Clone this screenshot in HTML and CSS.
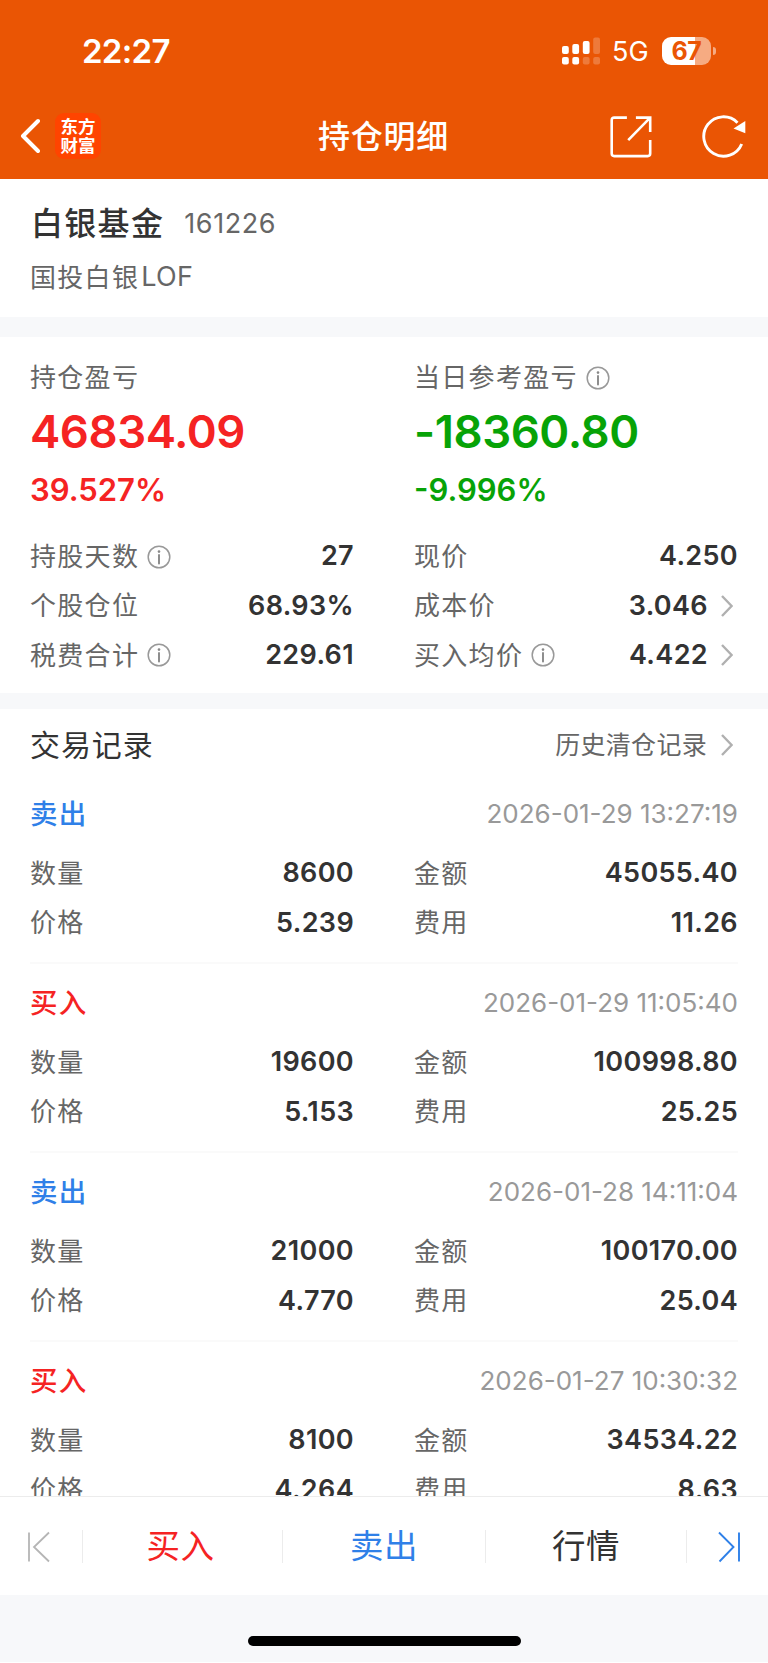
FILE: index.html
```html
<!DOCTYPE html>
<html lang="zh-CN">
<head>
<meta charset="utf-8">
<title>持仓明细</title>
<link rel="stylesheet" href="styles.css">
</head>
<body>
<svg class="defs" width="0" height="0">
  <symbol id="info" viewBox="0 0 24 24"><circle cx="12" cy="12" r="10.8" fill="none" stroke="#999" stroke-width="1.5"/><circle cx="12" cy="6.6" r="1.3" fill="#888"/><path d="M12 10v8.5" stroke="#888" stroke-width="1.9" stroke-linecap="round"/></symbol>
  <symbol id="chev" viewBox="0 0 12 22"><path d="M1 1l9.6 10L1 21" fill="none" stroke="#b0b0b0" stroke-width="2.4"/></symbol>
</svg>
<div class="screen">
  <header class="top">
    <div class="status">
      <span class="time">22:27</span>
      <div class="sys">
        <svg class="signal" width="39" height="28" viewBox="0 0 39 28" fill="#fff">
          <rect x="0" y="9" width="6.8" height="8" rx="2"/><rect x="10.3" y="7" width="6.8" height="10" rx="2"/><rect x="20.8" y="4" width="6.8" height="13" rx="2"/><rect x="31.2" y=".6" width="6.8" height="16.4" rx="2" opacity=".22"/>
          <rect x="0" y="20" width="6.8" height="7.6" rx="2"/><rect x="10.3" y="20" width="6.8" height="7.6" rx="2"/><rect x="20.8" y="20" width="6.8" height="7.6" rx="2" opacity=".22"/><rect x="31.2" y="20" width="6.8" height="7.6" rx="2" opacity=".22"/>
        </svg>
        <span class="net">5G</span>
        <div class="battery"><span>67</span></div>
        <i class="nub"></i>
      </div>
    </div>
    <nav class="nav">
      <div class="side">
        <svg class="back" width="20" height="36" viewBox="0 0 20 36"><path d="M18 3L3 18l15 15" fill="none" stroke="#fff" stroke-width="4" stroke-linecap="round" stroke-linejoin="round"/></svg>
        <div class="logo"><span>东方</span><span>财富</span></div>
      </div>
      <h1>持仓明细</h1>
      <div class="side right">
        <svg width="48" height="44" viewBox="-3.200 -1.100 48 44" fill="none" stroke="#fff" stroke-width="2.6"><path d="M17.700 2.500H5Q2.500 2.500 2.500 5V38.500Q2.500 41 5 41H38.500Q41 41 41 38.500V25M26.700 2.500H41V17M41 2.500L19 25"/></svg>
        <svg width="46" height="44" viewBox="0 0 46 44"><path d="M41.700 30A19.700 19.700 0 1 1 37.500 8.700" fill="none" stroke="#fff" stroke-width="2.900"/><path d="M45.300 7V19.300L33.500 14.500Z" fill="#fff"/></svg>
      </div>
    </nav>
  </header>

  <section class="fund">
    <div class="fund-head"><h2>白银基金</h2><span class="code">161226</span></div>
    <div class="label">国投白银<span class="latin">LOF</span></div>
  </section>

  <section class="summary">
    <div class="pair pl">
      <div class="red"><div class="label">持仓盈亏</div><div class="big">46834.09</div><div class="pct">39.527%</div></div>
      <div class="green"><div class="label">当日参考盈亏<svg class="info"><use href="#info"/></svg></div><div class="big">-18360.80</div><div class="pct">-9.996%</div></div>
    </div>
    <div class="pair rows">
      <div class="row"><span class="label">持股天数<svg class="info"><use href="#info"/></svg></span><b>27</b></div>
      <div class="row"><span class="label">现价</span><b>4.250</b></div>
      <div class="row"><span class="label">个股仓位</span><b>68.93%</b></div>
      <div class="row"><span class="label">成本价</span><b>3.046<svg class="chev"><use href="#chev"/></svg></b></div>
      <div class="row"><span class="label">税费合计<svg class="info"><use href="#info"/></svg></span><b>229.61</b></div>
      <div class="row"><span class="label">买入均价<svg class="info"><use href="#info"/></svg></span><b>4.422<svg class="chev"><use href="#chev"/></svg></b></div>
    </div>
  </section>

  <section class="trades">
    <div class="trades-head"><h3>交易记录</h3><span class="history">历史清仓记录<svg class="chev"><use href="#chev"/></svg></span></div>
    <article class="trade">
      <div class="trade-head"><strong class="sell">卖出</strong><time>2026-01-29 13:27:19</time></div>
      <div class="pair rows"><div class="row"><span class="label">数量</span><b>8600</b></div><div class="row"><span class="label">金额</span><b>45055.40</b></div><div class="row"><span class="label">价格</span><b>5.239</b></div><div class="row"><span class="label">费用</span><b>11.26</b></div></div>
    </article>
    <article class="trade">
      <div class="trade-head"><strong class="buy">买入</strong><time>2026-01-29 11:05:40</time></div>
      <div class="pair rows"><div class="row"><span class="label">数量</span><b>19600</b></div><div class="row"><span class="label">金额</span><b>100998.80</b></div><div class="row"><span class="label">价格</span><b>5.153</b></div><div class="row"><span class="label">费用</span><b>25.25</b></div></div>
    </article>
    <article class="trade">
      <div class="trade-head"><strong class="sell">卖出</strong><time>2026-01-28 14:11:04</time></div>
      <div class="pair rows"><div class="row"><span class="label">数量</span><b>21000</b></div><div class="row"><span class="label">金额</span><b>100170.00</b></div><div class="row"><span class="label">价格</span><b>4.770</b></div><div class="row"><span class="label">费用</span><b>25.04</b></div></div>
    </article>
    <article class="trade">
      <div class="trade-head"><strong class="buy">买入</strong><time>2026-01-27 10:30:32</time></div>
      <div class="pair rows"><div class="row"><span class="label">数量</span><b>8100</b></div><div class="row"><span class="label">金额</span><b>34534.22</b></div><div class="row"><span class="label">价格</span><b>4.264</b></div><div class="row"><span class="label">费用</span><b>8.63</b></div></div>
    </article>
  </section>

  <footer class="tabs">
    <div class="tab"><svg width="24" height="32" viewBox="0 0 24 32" fill="none" stroke="#b5b5b5" stroke-width="1.8"><path d="M2 1.500V30.500M22 1.500L7 16l15 14.500"/></svg></div>
    <div class="tab buy">买入</div>
    <div class="tab sell">卖出</div>
    <div class="tab">行情</div>
    <div class="tab"><svg width="24" height="32" viewBox="0 0 24 32" fill="none" stroke="#2f80e8" stroke-width="1.9"><path d="M22 1.500V30.500M2 1.500L16.500 16 2.500 30.500"/></svg></div>
  </footer>
  <div class="home"><i></i></div>
</div>
</body>
</html>
```
FILE: styles.css
```css
* { box-sizing: border-box; }
body { margin: 0; background: #fff; }
h1, h2, h3 { margin: 0; font-weight: 500; }
svg { display: block; flex: none; }
.defs { position: absolute; }

.screen {
  width: 768px; height: 1663px;
  display: flex; flex-direction: column;
  overflow: hidden;
  background: #fff;
  color: #333;
  font-family: Inter, "Noto Sans CJK SC", sans-serif;
  line-height: 1.2;
}

/* Header */
.top { height: 179px; flex: none; background: #ea5504; color: #fff; }
.status { height: 93px; padding: 9px 52px 0 82px; display: flex; align-items: center; justify-content: space-between; }
.time { font-size: 33px; font-weight: 600; letter-spacing: -0.7px; padding-top: 1px; }
.sys { display: flex; align-items: center; }
.net { margin-left: 11px; width: 50px; padding-top: 3px; font-size: 27px; }
.battery {
  width: 49px; height: 28px; border-radius: 9px;
  background: linear-gradient(90deg, #fff 33px, #f6ab82 33px);
  color: #ea5504; font-size: 25px; font-weight: 700; line-height: 28px; text-align: center;
  letter-spacing: -0.5px;
}
.nub { width: 3px; height: 8px; margin-left: 2px; border-radius: 0 4px 4px 0; background: #f6ab82; }
.nav { height: 86px; padding: 0 22px 0 20px; display: flex; align-items: center; justify-content: space-between; }
.nav h1 { font-size: 32px; letter-spacing: 0.8px; padding: 2px 0 0 1px; }
.side { width: 140px; display: flex; align-items: center; }
.side.right { justify-content: space-between; }
.logo {
  width: 46px; height: 46px; margin-left: 15px; border-radius: 9px;
  background: #ff4400; display: flex; flex-direction: column; align-items: center; justify-content: center;
  font-size: 17.5px; font-weight: 700; line-height: 19px;
}

/* Fund name */
.fund { height: 158px; flex: none; padding: 23px 30px 0; border-bottom: 20px solid #f7f8fa; }
.fund-head { height: 44px; display: flex; align-items: center; }
.fund h2 { font-size: 32px; letter-spacing: 1.3px; padding-left: 1px; }
.code { margin-left: 20px; font-size: 27px; color: #666; letter-spacing: 0.6px; }
.fund > .label { height: 63px; }
.latin { font-size: 27px; margin-left: 2px; letter-spacing: 0.3px; }

.label { display: flex; align-items: center; font-size: 26px; letter-spacing: 1.3px; color: #666; }
.info { width: 24px; height: 24px; margin-left: 8px; }
.pair { display: grid; grid-template-columns: 324px 324px; column-gap: 60px; }
.rows { grid-auto-rows: 49.3px; }
.row { display: flex; align-items: center; justify-content: space-between; }
.row b { display: flex; align-items: center; font-size: 27px; font-weight: 600; letter-spacing: 0.35px; }
.chev { width: 12px; height: 22px; margin: 0 5px 0 13px; }

/* Profit summary */
.summary { height: 372px; flex: none; padding: 23px 30px 0; border-bottom: 16px solid #f7f8fa; }
.pl { height: 172px; }
.pl .label { height: 36px; }
.big { height: 72px; line-height: 72px; font-size: 45.5px; font-weight: 600; letter-spacing: -0.45px; }
.pct { height: 44px; line-height: 43px; font-size: 31px; font-weight: 600; }
.red .big, .red .pct { color: #f52323; }
.green .big, .green .pct { color: #07a307; }

/* Trade records */
.trades { flex: 1; min-height: 0; overflow: hidden; padding: 0 30px; }
.trades-head { height: 66px; padding-top: 5px; display: flex; align-items: center; justify-content: space-between; }
.trades-head h3 { font-size: 30px; font-weight: 400; letter-spacing: 0.9px; }
.history { display: flex; align-items: center; font-size: 25px; letter-spacing: 0.3px; color: #666; }
.history .chev { margin-left: 14px; }
.trade { height: 189px; border-bottom: 2px solid #fafafa; }
.trade-head { height: 74px; padding-top: 4px; display: flex; align-items: center; justify-content: space-between; }
.trade-head strong { font-size: 27.5px; font-weight: 500; letter-spacing: 1.3px; }
time { font-size: 26px; color: #999; }
.buy { color: #f52323; }
.sell { color: #2f80e8; }

/* Bottom actions */
.tabs {
  height: 99px; flex: none; border-top: 1px solid #ececec;
  display: grid; grid-template-columns: 83px 200px 203px 201px 81px; align-items: center;
  font-size: 33.5px; letter-spacing: 0.5px;
}
.tab { height: 33px; padding-top: 1px; display: flex; align-items: center; justify-content: center; border-right: 1px solid #ececec; }
.tab.buy { padding-right: 4px; }
.tab:first-child { justify-content: flex-start; padding-left: 27px; }
.tab:last-child { justify-content: flex-start; padding-left: 30px; border: 0; }
.home { height: 67px; flex: none; margin-bottom: 1px; padding-top: 41px; background: #f7f8fa; }
.home i { display: block; width: 273px; height: 10px; margin: 0 auto; border-radius: 5px; background: #000; }
```
